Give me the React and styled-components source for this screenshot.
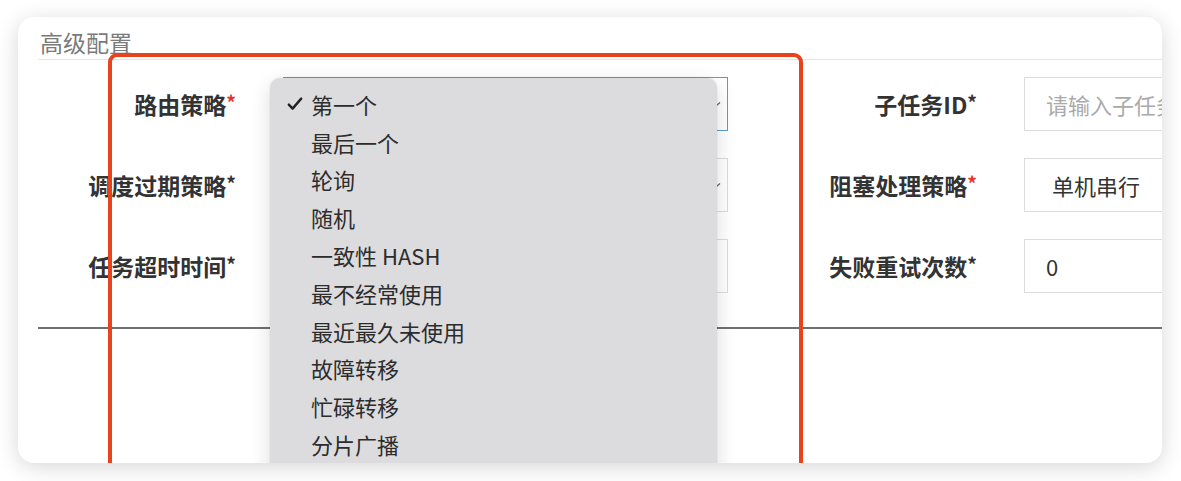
import React from 'react'
import styled, { createGlobalStyle } from 'styled-components'

const GlobalStyle = createGlobalStyle`
  body {
    margin: 0;
    background: #ffffff;
    font-family: "Noto Sans CJK SC", "Noto Sans", sans-serif;
  }
`

const Page = styled.div`
  padding: 17px 19px 18px 18px;
`

const Card = styled.div`
  position: relative;
  width: 1144px;
  height: 446px;
  overflow: hidden;
  background: #ffffff;
  border-radius: 16px;
  box-shadow: 0 4px 22px rgba(0, 0, 0, 0.16);
`

const Header = styled.div`
  margin-left: 20px;
  padding: 9px 0 0 2px;
  height: 33px;
  border-bottom: 1px solid #e6e6e6;
  font-size: 23px;
  line-height: 32px;
  color: #7a7a7a;
`

const FormGrid = styled.div`
  display: grid;
  grid-template-columns: 265px 445px 296px 320px;
  grid-auto-rows: 54px;
  row-gap: 27px;
  margin-top: 17px;
`

const FieldLabel = styled.div`
  display: flex;
  align-items: center;
  justify-content: flex-end;
  padding-right: 47px;
  font-size: 23px;
  font-weight: 700;
  color: #333333;
  white-space: nowrap;
`

const Req = styled.span`
  color: ${(p) => (p.$red ? '#e5322d' : '#333333')};
  font-size: 19px;
  align-self: flex-start;
  margin-top: 11px;
`

const Field = styled.div`
  position: relative;
  display: flex;
  align-items: center;
  height: 100%;
  box-sizing: border-box;
  padding: 0 ${(p) => (p.$select ? 27 : 21)}px;
  border: 1px solid ${(p) => (p.$focus ? '#5b9ccf' : '#dcdcdc')};
  background: #ffffff;
  font-size: 22px;
  color: ${(p) => (p.$placeholder ? '#aaaaaa' : '#333333')};
  white-space: nowrap;
  overflow: hidden;
`

const Chevron = styled.svg`
  position: absolute;
  right: 6px;
  top: 50%;
  width: 10px;
  height: 10px;
  margin-top: -5px;
`

const Divider = styled.div`
  margin: 34px 0 0 20px;
  height: 2px;
  background: #707070;
`

const Annotation = styled.div`
  position: absolute;
  left: 90px;
  top: 36px;
  width: 695px;
  height: 520px;
  border: 4px solid #e8431d;
  border-radius: 9px;
  box-sizing: border-box;
  pointer-events: none;
`

const SelectSlot = styled.div`
  position: relative;
`

const Menu = styled.ul`
  position: absolute;
  left: -13px;
  top: 1px;
  z-index: 2;
  width: 447px;
  height: 420px;
  margin: 0;
  padding: 7px 0 0 17px;
  box-sizing: border-box;
  list-style: none;
  background: #dcdcde;
  border-radius: 10px;
  box-shadow: 0 6px 20px rgba(0, 0, 0, 0.14), 0 0 0 1px rgba(0, 0, 0, 0.03);
`

const MenuItem = styled.li`
  display: flex;
  align-items: center;
  height: 37.8px;
  font-size: 22px;
  color: #2c2c2c;
`

const CheckSlot = styled.span`
  display: flex;
  align-items: center;
  width: 24px;
`

const CheckIcon = () => (
  <svg width="16" height="16" viewBox="0 0 16 16">
    <path d="M1.8 8.6 L5.6 12.6 L14.2 2.6" fill="none" stroke="#222" strokeWidth="2.4" strokeLinecap="round" strokeLinejoin="round" />
  </svg>
)

const routeOptions = [
  '第一个',
  '最后一个',
  '轮询',
  '随机',
  '一致性 HASH',
  '最不经常使用',
  '最近最久未使用',
  '故障转移',
  '忙碌转移',
  '分片广播',
]

const Arrow = () => (
  <Chevron viewBox="0 0 10 10">
    <path d="M1 3.5 L5 7 L9 3.5" fill="none" stroke="#666" strokeWidth="1.3" />
  </Chevron>
)

export default function App() {
  return (
    <>
      <GlobalStyle />
      <Page>
        <Card>
          <Header>高级配置</Header>
          <FormGrid>
            <FieldLabel>路由策略<Req $red>*</Req></FieldLabel>
            <SelectSlot>
              <Field $select $focus>
                <Arrow />
              </Field>
              <Menu>
                {routeOptions.map((item, index) => (
                  <MenuItem key={item}>
                    <CheckSlot>{index === 0 && <CheckIcon />}</CheckSlot>
                    {item}
                  </MenuItem>
                ))}
              </Menu>
            </SelectSlot>
            <FieldLabel>子任务ID<Req>*</Req></FieldLabel>
            <Field $placeholder>请输入子任务ID</Field>

            <FieldLabel>调度过期策略<Req>*</Req></FieldLabel>
            <Field $select>
              <Arrow />
            </Field>
            <FieldLabel>阻塞处理策略<Req $red>*</Req></FieldLabel>
            <Field $select>单机串行</Field>

            <FieldLabel>任务超时时间<Req>*</Req></FieldLabel>
            <Field />
            <FieldLabel>失败重试次数<Req>*</Req></FieldLabel>
            <Field>0</Field>
          </FormGrid>
          <Divider />
          <Annotation />
        </Card>
      </Page>
    </>
  )
}
